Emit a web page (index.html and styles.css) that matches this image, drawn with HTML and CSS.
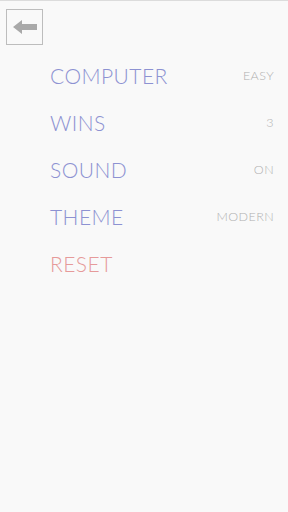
FILE: index.html
```html
<!DOCTYPE html>
<html lang="en">
<head>
  <meta charset="UTF-8">
  <meta name="viewport" content="width=device-width, initial-scale=1.0">
  <title>settings</title>
  <link rel="stylesheet" href="styles.css">
</head>
<body>
  <div class="topbar">
    <button class="back-button">
      <svg width="24" height="14" viewBox="0 0 24 14">
        <path d="M0 7 L9 0 L9 4 L24 4 L24 10 L9 10 L9 14 Z" fill="#a9a9a9"/>
      </svg>
    </button>
  </div>

  <ul class="settings">
    <li class="row"><span class="label">COMPUTER</span><span class="value">EASY</span></li>
    <li class="row"><span class="label">WINS</span><span class="value">3</span></li>
    <li class="row"><span class="label">SOUND</span><span class="value">ON</span></li>
    <li class="row"><span class="label">THEME</span><span class="value">MODERN</span></li>
    <li class="row"><span class="label reset">RESET</span></li>
  </ul>
</body>
</html>
```

FILE: styles.css
```css
body {
  margin: 0;
  height: 512px;
  background-color: #f9f9f9;
  border-top: 1px solid #dcdcdc;
  font-family: Lato, "Open Sans", sans-serif;
  font-weight: 300;
  box-sizing: border-box;
}
.topbar {
  padding: 8px 0 0 6px;
}
.back-button {
  width: 37px;
  height: 36px;
  margin: 0;
  padding: 0;
  border: 1px solid #bdbdbd;
  background: #f9f9f9;
  display: flex;
  align-items: center;
  justify-content: center;
}
.settings {
  list-style: none;
  margin: 0;
  padding: 7px 14px 0 50px;
}
.row {
  display: flex;
  align-items: center;
  justify-content: space-between;
  height: 47px;
}
.label {
  font-size: 21px;
  color: #8d92d2;
  letter-spacing: 0.45px;
}
.label.reset {
  color: #e69a9a;
}
.value {
  font-size: 12.5px;
  color: #b0b0b0;
  letter-spacing: 0.4px;
}
```
